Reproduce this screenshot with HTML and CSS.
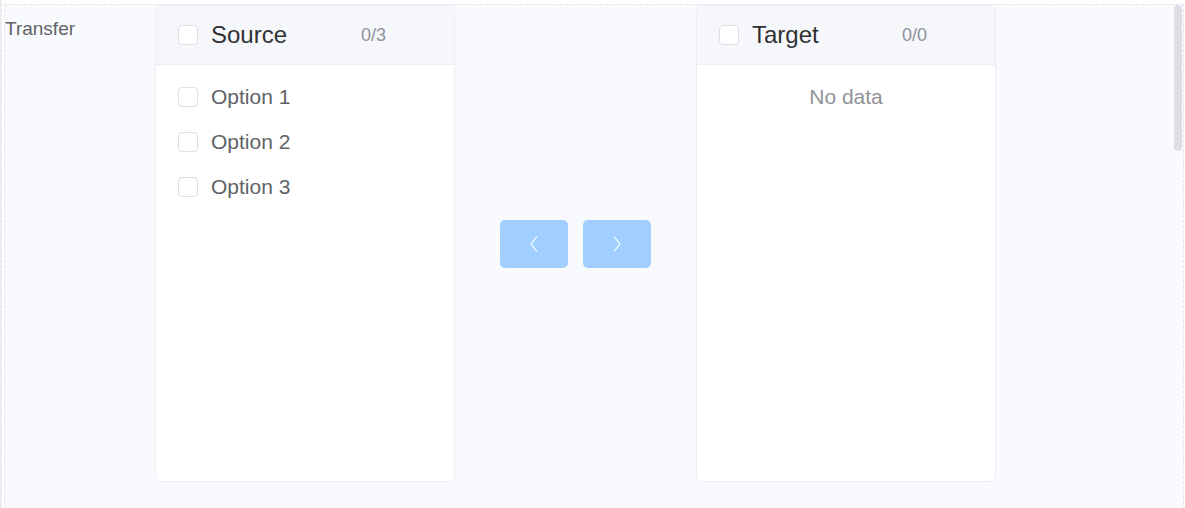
FILE: index.html
```html
<!DOCTYPE html>
<html>
<head>
<meta charset="utf-8">
<link rel="stylesheet" href="styles.css">
</head>
<body>
<div class="page">
  <div class="frame">
    <div class="field">
      <div class="label">Transfer</div>
      <div class="transfer">
        <div class="panel">
          <div class="panel-head">
            <span class="check"></span>
            <span class="title">Source</span>
            <span class="count">0/3</span>
          </div>
          <div class="panel-body">
            <div class="item"><span class="check"></span><span>Option 1</span></div>
            <div class="item"><span class="check"></span><span>Option 2</span></div>
            <div class="item"><span class="check"></span><span>Option 3</span></div>
          </div>
        </div>
        <div class="buttons">
          <button class="btn"><svg width="12" height="18" viewBox="0 0 12 18"><path d="M9 1.5 L3 9 L9 16.5" fill="none" stroke="#fff" stroke-width="1.2"/></svg></button>
          <button class="btn"><svg width="12" height="18" viewBox="0 0 12 18"><path d="M3 1.5 L9 9 L3 16.5" fill="none" stroke="#fff" stroke-width="1.2"/></svg></button>
        </div>
        <div class="panel">
          <div class="panel-head">
            <span class="check"></span>
            <span class="title">Target</span>
            <span class="count">0/0</span>
          </div>
          <div class="panel-body">
            <div class="empty">No data</div>
          </div>
        </div>
      </div>
    </div>
    <div class="thumb"></div>
  </div>
</div>
</body>
</html>
```

FILE: styles.css
```css
html, body {
  margin: 0;
  padding: 0;
  background: #ffffff;
  font-family: "Liberation Sans", Arial, sans-serif;
  overflow: hidden;
}
.page {
  height: 508px;
  border-left: 2px solid #ececef;
  padding: 4px 0 0 2px;
  box-sizing: border-box;
}
.frame {
  position: relative;
  height: 520px;
  border: 1px dashed #e2e4ee;
  background: #f9fafe;
  box-sizing: border-box;
  margin-right: 1px;
}
.field {
  display: flex;
  align-items: flex-start;
}
.label {
  width: 150px;
  font-size: 19px;
  color: #606266;
  line-height: 22px;
  padding-top: 13px;
}
.transfer {
  display: flex;
  align-items: center;
}
.panel {
  width: 300px;
  height: 477px;
  box-sizing: border-box;
  background: #fff;
  border: 1px solid #ebeef5;
  border-radius: 6px;
  overflow: hidden;
  display: flex;
  flex-direction: column;
}
.panel-head {
  height: 58px;
  flex: none;
  background: #f5f7fa;
  border-bottom: 1px solid #ebeef5;
  display: flex;
  align-items: center;
  padding-left: 22px;
}
.check {
  display: inline-block;
  width: 18px;
  height: 18px;
  border: 1px solid #dcdfe6;
  border-radius: 4px;
  background: #fff;
  flex: none;
}
.title {
  margin-left: 13px;
  font-size: 24px;
  color: #303133;
  width: 150px;
}
.count {
  font-size: 18px;
  color: #909399;
}
.panel-body {
  padding-top: 9px;
}
.item {
  height: 45px;
  display: flex;
  align-items: center;
  padding-left: 22px;
  font-size: 21px;
  color: #606266;
}
.item .check {
  margin-right: 13px;
}
.empty {
  height: 45px;
  line-height: 45px;
  text-align: center;
  font-size: 21px;
  color: #909399;
}
.buttons {
  display: flex;
  gap: 15px;
  padding: 0 45px;
}
.btn {
  width: 68px;
  height: 48px;
  border: none;
  border-radius: 5px;
  background: #a0cfff;
  display: flex;
  align-items: center;
  justify-content: center;
  padding: 0;
}
.thumb {
  position: absolute;
  right: 1px;
  top: 0;
  width: 8px;
  height: 146px;
  background: #dedfe6;
  border-radius: 4px;
}
```
